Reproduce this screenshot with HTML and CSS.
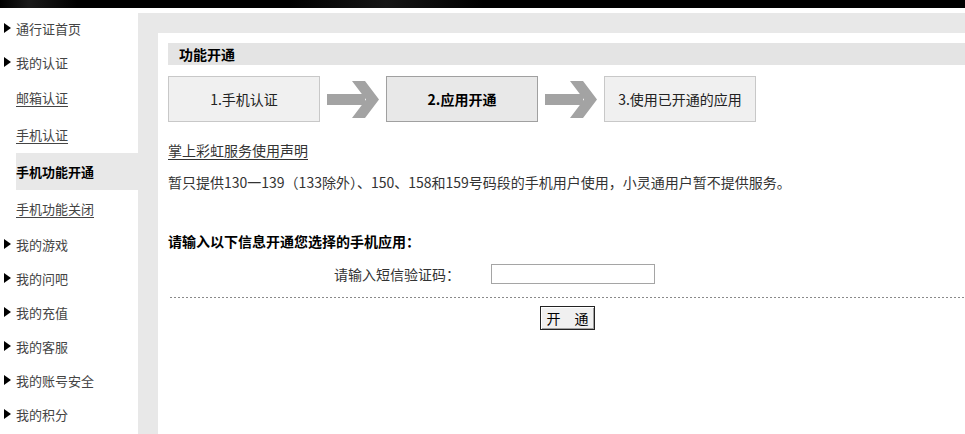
FILE: index.html
```html
<!DOCTYPE html>
<html lang="zh-CN">
<head>
<meta charset="utf-8">
<title>功能开通</title>
<link rel="stylesheet" href="styles.css">
</head>
<body>
<div class="topbar"></div>
<div class="layout">
  <nav class="sidebar">
    <a class="nav-item main">通行证首页</a>
    <a class="nav-item main">我的认证</a>
    <a class="nav-item sub">邮箱认证</a>
    <a class="nav-item sub">手机认证</a>
    <a class="nav-item sub active">手机功能开通</a>
    <a class="nav-item sub">手机功能关闭</a>
    <a class="nav-item main">我的游戏</a>
    <a class="nav-item main">我的问吧</a>
    <a class="nav-item main">我的充值</a>
    <a class="nav-item main">我的客服</a>
    <a class="nav-item main">我的账号安全</a>
    <a class="nav-item main">我的积分</a>
  </nav>
  <main class="panel">
    <div class="content">
      <div class="title-bar">功能开通</div>
      <div class="steps">
        <div class="step">1.手机认证</div>
        <div class="arrow">
          <svg width="52" height="37" viewBox="0 0 52 37"><rect x="0" y="13" width="38" height="11" fill="#a3a3a3"/><polygon points="25,0 38,0 52,18.5 38,37 25,37 39,18.5" fill="#a3a3a3"/></svg>
        </div>
        <div class="step current">2.应用开通</div>
        <div class="arrow">
          <svg width="52" height="37" viewBox="0 0 52 37"><rect x="0" y="13" width="38" height="11" fill="#a3a3a3"/><polygon points="25,0 38,0 52,18.5 38,37 25,37 39,18.5" fill="#a3a3a3"/></svg>
        </div>
        <div class="step">3.使用已开通的应用</div>
      </div>
      <p class="notice-link"><a>掌上彩虹服务使用声明</a></p>
      <p class="notice">暂只提供130一139（133除外）、150、158和159号码段的手机用户使用，小灵通用户暂不提供服务。</p>
      <h3 class="form-title">请输入以下信息开通您选择的手机应用：</h3>
      <div class="form-row">
        <label class="form-label" for="code">请输入短信验证码：</label>
        <input class="form-input" id="code" type="text">
      </div>
      <div class="divider"></div>
      <div class="actions">
        <button class="btn" type="button">开　通</button>
      </div>
    </div>
  </main>
</div>
</body>
</html>
```

FILE: styles.css
```css
html, body {
  margin: 0;
  padding: 0;
  height: 100%;
  overflow: hidden;
  background: #fff;
  font-family: "Noto Sans CJK SC", sans-serif;
  font-size: 14px;
  color: #333;
}

.topbar {
  height: 8px;
  background: linear-gradient(90deg, #000 0%, #1a1a1a 3%, #000 8%, #000 30%, #161616 40%, #000 50%, #000 100%);
}

.layout {
  display: flex;
  height: calc(100% - 8px);
}

.sidebar {
  width: 138px;
  flex: 0 0 138px;
  padding-top: 3px;
  display: flex;
  flex-direction: column;
}

.nav-item {
  display: flex;
  align-items: center;
  font-size: 13px;
  color: #444;
  text-decoration: none;
  white-space: nowrap;
}

.nav-item.main {
  height: 34px;
  padding-left: 4px;
}

.nav-item.main::before {
  content: "";
  width: 0;
  height: 0;
  border-left: 7px solid #000;
  border-top: 5px solid transparent;
  border-bottom: 5px solid transparent;
  margin-right: 5px;
}

.nav-item.sub {
  height: 37px;
  margin-left: 16px;
  text-decoration: underline;
  text-underline-offset: 3px;
}

.nav-item.sub.active {
  background: #e8e8e8;
  color: #000;
  font-weight: bold;
  text-decoration: none;
}

.panel {
  flex: 1;
  margin-top: 5px;
  background: #e8e8e8;
  padding: 20px 0 0 20px;
  min-width: 0;
}

.content {
  background: #fff;
  height: 100%;
  padding: 10px 0 0 10px;
  box-sizing: border-box;
}

.title-bar {
  height: 22px;
  line-height: 22px;
  background: #e4e4e4;
  padding-left: 11px;
  font-weight: bold;
  color: #000;
}

.steps {
  display: flex;
  margin-top: 11px;
  height: 46px;
}

.step {
  width: 152px;
  height: 46px;
  box-sizing: border-box;
  border: 1px solid #c8c8c8;
  background: #f0f0f0;
  display: flex;
  align-items: center;
  justify-content: center;
  color: #222;
}

.step.current {
  border-color: #a0a0a0;
  background: #e8e8e8;
  font-weight: bold;
  color: #000;
}

.arrow {
  width: 66px;
  display: flex;
  align-items: center;
  justify-content: center;
}

.arrow svg {
  display: block;
}

.notice-link {
  margin: 18px 0 0;
  line-height: 20px;
}

.notice-link a {
  color: #333;
  text-decoration: underline;
  text-underline-offset: 3px;
}

.notice {
  margin: 12px 0 0;
  line-height: 20px;
}

.form-title {
  margin: 39px 0 0;
  font-size: 14px;
  line-height: 20px;
  font-weight: bold;
  color: #000;
}

.form-row {
  display: flex;
  align-items: center;
  margin-top: 13px;
  height: 20px;
}

.form-label {
  width: 292px;
  text-align: right;
  color: #333;
}

.form-input {
  margin-left: 31px;
  width: 164px;
  height: 20px;
  box-sizing: border-box;
  border: 1px solid #a5a5a5;
  padding: 0 2px;
  font: inherit;
  outline: none;
}

.divider {
  margin: 13px 0 0 2px;
  height: 1px;
  background: repeating-linear-gradient(90deg, #8a8a8a 0 2px, transparent 2px 4px);
}

.actions {
  margin-top: 8px;
  padding-left: 372px;
}

.btn {
  width: 55px;
  height: 24px;
  box-sizing: border-box;
  border: 1px solid #222;
  background: #f0f0f0;
  box-shadow: inset 1px 1px 0 #fff, inset -1px -1px 0 #a0a0a0;
  font-family: "Noto Sans CJK SC", sans-serif;
  font-size: 14px;
  line-height: 20px;
  color: #000;
  padding: 0;
}
```
